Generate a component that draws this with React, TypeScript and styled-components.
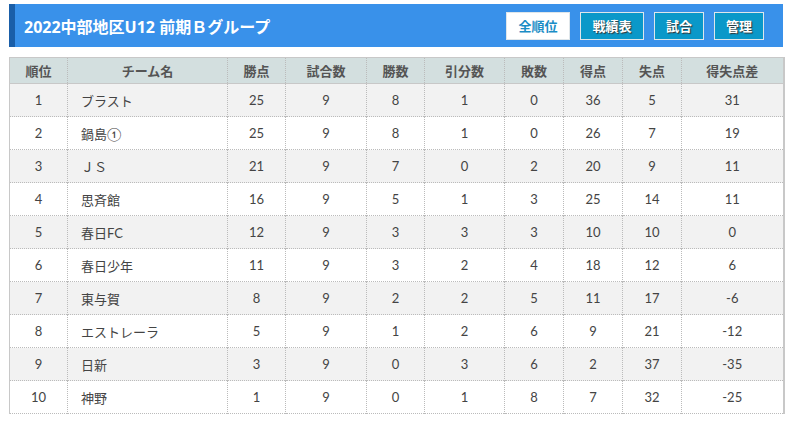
import React from "react";
import styled, { createGlobalStyle } from "styled-components";

const GlobalStyle = createGlobalStyle`
  body {
    margin: 0;
    background: #fff;
    font-family: "Lato", "Noto Sans CJK JP", sans-serif;
  }
`;

const Page = styled.div`
  padding: 4px 9px 0 9px;
  width: 774px;
`;

const TitleBar = styled.div`
  display: flex;
  align-items: center;
  height: 43px;
  background: #3991ea;
  border-left: 6px solid #1a5ea8;
  padding: 0 19px 0 9px;
`;

const Title = styled.h1`
  margin: 0;
  flex: 1;
  color: #fff;
  font-size: 16px;
  font-weight: bold;
  font-family: "Noto Sans", "Noto Sans CJK JP", sans-serif;
  letter-spacing: 0;
`;

const NavButtons = styled.div`
  display: flex;
  gap: 10px;
`;

const NavButton = styled.a<{ $active?: boolean; $w: number }>`
  display: flex;
  align-items: center;
  justify-content: center;
  box-sizing: border-box;
  width: ${(p) => p.$w}px;
  height: 28px;
  border: 1px solid #dfe6ea;
  background: ${(p) => (p.$active ? "#fff" : "#0a98c9")};
  color: ${(p) => (p.$active ? "#1a8dc6" : "#fff")};
  text-shadow: ${(p) => (p.$active ? "none" : "1px 1px 1px #333")};
  font-size: 13px;
  font-weight: bold;
  font-family: "Noto Sans CJK JP", sans-serif;
  cursor: pointer;
`;

const Table = styled.table`
  margin-top: 10px;
  width: 774px;
  border-collapse: collapse;
  table-layout: fixed;
  border-left: 1px solid #c8c8c8;
  border-right: 2px solid #c8c8c8;
  border-bottom: 1px dotted #bbb;
  font-size: 13px;
  color: #444;
`;

const HeadCell = styled.th`
  height: 25px;
  padding: 0;
  background: #d3dfdf;
  color: #555;
  font-weight: bold;
  font-size: 13px;
  font-family: "Noto Sans CJK JP", sans-serif;
  border-top: 1px solid #c8c8c8;
  border-bottom: 1px solid #c8c8c8;
  border-left: 1px dotted #bbb;
  &:first-child {
    border-left: none;
  }
`;

const Row = styled.tr<{ $odd: boolean }>`
  background: ${(p) => (p.$odd ? "#f2f2f2" : "#fff")};
`;

const Cell = styled.td<{ $left?: boolean }>`
  height: 32px;
  padding: 0 ${(p) => (p.$left ? "13px" : "0")};
  text-align: ${(p) => (p.$left ? "left" : "center")};
  border-top: 1px dotted #bbb;
  border-left: 1px dotted #bbb;
  &:first-child {
    border-left: none;
  }
`;

const columns = [
  { label: "順位", w: 58 },
  { label: "チーム名", w: 160 },
  { label: "勝点", w: 58 },
  { label: "試合数", w: 81 },
  { label: "勝数", w: 58 },
  { label: "引分数", w: 80 },
  { label: "敗数", w: 59 },
  { label: "得点", w: 59 },
  { label: "失点", w: 59 },
  { label: "得失点差", w: 102 },
];

const rows: (string | number)[][] = [
  [1, "ブラスト", 25, 9, 8, 1, 0, 36, 5, 31],
  [2, "鍋島①", 25, 9, 8, 1, 0, 26, 7, 19],
  [3, "ＪＳ", 21, 9, 7, 0, 2, 20, 9, 11],
  [4, "思斉館", 16, 9, 5, 1, 3, 25, 14, 11],
  [5, "春日FC", 12, 9, 3, 3, 3, 10, 10, 0],
  [6, "春日少年", 11, 9, 3, 2, 4, 18, 12, 6],
  [7, "東与賀", 8, 9, 2, 2, 5, 11, 17, -6],
  [8, "エストレーラ", 5, 9, 1, 2, 6, 9, 21, -12],
  [9, "日新", 3, 9, 0, 3, 6, 2, 37, -35],
  [10, "神野", 1, 9, 0, 1, 8, 7, 32, -25],
];

const navItems = [
  { label: "全順位", w: 64, active: true },
  { label: "戦績表", w: 64 },
  { label: "試合", w: 50 },
  { label: "管理", w: 50 },
];

export default function App() {
  return (
    <>
      <GlobalStyle />
      <Page>
        <TitleBar>
          <Title>2022中部地区U12 前期Ｂグループ</Title>
          <NavButtons>
            {navItems.map((n) => (
              <NavButton key={n.label} $active={n.active} $w={n.w}>
                {n.label}
              </NavButton>
            ))}
          </NavButtons>
        </TitleBar>
        <Table>
          <colgroup>
            {columns.map((c) => (
              <col key={c.label} style={{ width: c.w }} />
            ))}
          </colgroup>
          <thead>
            <tr>
              {columns.map((c) => (
                <HeadCell key={c.label}>{c.label}</HeadCell>
              ))}
            </tr>
          </thead>
          <tbody>
            {rows.map((r, i) => (
              <Row key={i} $odd={i % 2 === 0}>
                {r.map((v, j) => (
                  <Cell key={j} $left={j === 1}>
                    {v}
                  </Cell>
                ))}
              </Row>
            ))}
          </tbody>
        </Table>
      </Page>
    </>
  );
}
